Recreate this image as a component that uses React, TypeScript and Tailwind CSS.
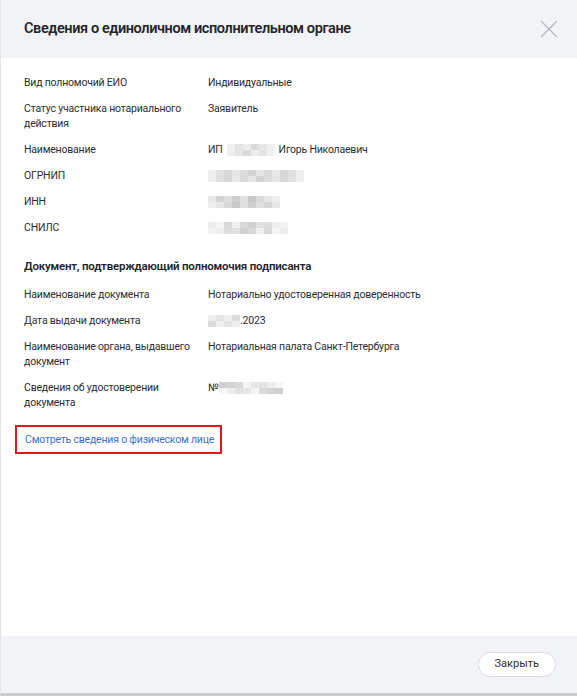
import React from "react";

type Row = { label: string; value: React.ReactNode };

function Blur({ shades }: { shades: string[] }) {
    return (
        <span className="flex flex-col">
            <span className="flex">
                {shades.map((c, i) => (
                    <span key={i} className="w-[8px] h-[6px]" style={{ backgroundColor: c }} />
                ))}
            </span>
            <span className="flex">
                {shades.slice().reverse().map((c, i) => (
                    <span key={i} className="w-[8px] h-[6px]" style={{ backgroundColor: c }} />
                ))}
            </span>
        </span>
    );
}

const g1 = ["#eeeeee", "#e2e2e2", "#d9d9d9", "#e6e6e6", "#dcdcdc", "#d2d2d2", "#e4e4e4", "#dadada", "#e8e8e8", "#d6d6d6", "#e0e0e0", "#ececec"];
const g2 = ["#e8e8e8", "#d4d4d4", "#dedede", "#cfcfcf", "#e0e0e0", "#c8c8c8", "#d8d8d8", "#e6e6e6", "#eeeeee"];
const g3 = ["#ececec", "#f4f4f4", "#d8d8d8", "#f0f0f0", "#dadada", "#d0d0d0", "#e2e2e2", "#dcdcdc", "#eeeeee", "#f2f2f2"];

const mainRows: Row[] = [
    { label: "Вид полномочий ЕИО", value: "Индивидуальные" },
    { label: "Статус участника нотариального действия", value: "Заявитель" },
    {
        label: "Наименование",
        value: (
            <span className="flex h-[15px] items-center gap-[4px]">
                ИП <Blur shades={["#f0f0f0", "#e4e4e4", "#ececec", "#dadada", "#e6e6e6", "#eeeeee"]} /> Игорь Николаевич
            </span>
        ),
    },
    { label: "ОГРНИП", value: <span className="flex h-[15px] items-center"><Blur shades={g1} /></span> },
    { label: "ИНН", value: <span className="flex h-[15px] items-center"><Blur shades={g2} /></span> },
    { label: "СНИЛС", value: <span className="flex h-[15px] items-center"><Blur shades={g3} /></span> },
];

const docRows: Row[] = [
    { label: "Наименование документа", value: "Нотариально удостоверенная доверенность" },
    {
        label: "Дата выдачи документа",
        value: (
            <span className="flex h-[15px] items-center">
                <Blur shades={["#eeeeee", "#e4e4e4", "#f0f0f0", "#dcdcdc"]} />.2023
            </span>
        ),
    },
    { label: "Наименование органа, выдавшего документ", value: "Нотариальная палата Санкт-Петербурга" },
    {
        label: "Сведения об удостоверении документа",
        value: (
            <span className="flex h-[15px] items-center">
                №<Blur shades={["#cfcfcf", "#d4d4d4", "#dadada", "#f4f4f4", "#e6e6e6", "#e2e2e2", "#eeeeee", "#f6f6f6"]} />
            </span>
        ),
    },
];

function InfoRows({ rows }: { rows: Row[] }) {
    return (
        <div className="flex flex-col gap-[11px]">
            {rows.map((r, i) => (
                <div key={i} className="flex text-[10.5px] leading-[15px] tracking-[-0.2px] text-[#2b2d33]">
                    <div className="w-[184px] shrink-0 pr-[8px]">{r.label}</div>
                    <div>{r.value}</div>
                </div>
            ))}
        </div>
    );
}

export default function App() {
    return (
        <div className="w-[577px] h-[696px] bg-white flex flex-col border-l border-[#e4e5ea] border-b-[3px] border-b-[#c9ccd3]" style={{ fontFamily: 'Roboto, sans-serif' }}>
            {/* Header */}
            <div className="h-[58px] shrink-0 bg-[#f2f3f7] flex items-center justify-between pl-[23px] pr-[19px]">
                <h1 className="text-[14.5px] font-semibold tracking-[-0.4px] text-[#23252b]">Сведения о единоличном исполнительном органе</h1>
                <svg width="18" height="18" viewBox="0 0 18 18" fill="none" stroke="#b4b7bf" strokeWidth="1.2">
                    <path d="M1 1L17 17M17 1L1 17" />
                </svg>
            </div>

            {/* Body */}
            <div className="flex-1 pt-[17px] px-[23px]">
                <InfoRows rows={mainRows} />

                <h2 className="mt-[23px] mb-[12px] text-[11.5px] font-semibold tracking-[-0.2px] text-[#23252b]">
                    Документ, подтверждающий полномочия подписанта
                </h2>
                <InfoRows rows={docRows} />

                <div className="mt-[15px] -ml-[9px] w-[207px] h-[29px] border-2 border-[#e3161d] flex items-center pl-[8px]">
                    <a className="text-[10.5px] tracking-[-0.2px] text-[#3b6fd0] whitespace-nowrap">Смотреть сведения о физическом лице</a>
                </div>
            </div>

            {/* Footer */}
            <div className="h-[57px] shrink-0 bg-[#f2f3f7] flex items-center justify-end pr-[21px]">
                <button className="h-[25px] px-[16px] rounded-full bg-white border border-[#d9dbe0] text-[11px] text-[#2b2d33]">
                    Закрыть
                </button>
            </div>
        </div>
    );
}
